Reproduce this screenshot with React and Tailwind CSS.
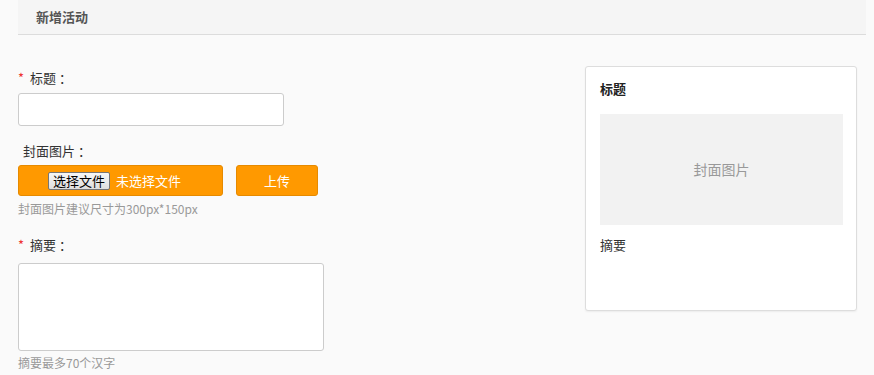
const font = { fontFamily: '"Noto Sans CJK SC", "Liberation Sans", sans-serif' };

export default function App() {
  return (
    <div className="min-h-[375px] w-[874px] bg-[#fafafa] text-[#333]" style={font}>
      {/* Header */}
      <div className="ml-[18px] flex h-[35px] w-[848px] items-center border-b border-[#dcdcdc] bg-[#f5f5f5] pl-[18px]">
        <h2 className="text-[13px] font-bold text-[#555]">新增活动</h2>
      </div>

      <div className="flex px-[18px]">
        {/* Form */}
        <div className="w-[564px] shrink-0 pt-[33px]">
          <div className="flex h-[20px] items-center text-[13px]">
            <span className="mr-[6px] text-[#e33]">*</span>
            <span>标题 ：</span>
          </div>
          <input
            type="text"
            className="mt-[5px] block h-[33px] w-[266px] rounded-[3px] border border-[#ccc] bg-white outline-none"
          />

          <div className="mt-[15px] flex h-[20px] items-center pl-[5px] text-[13px]">封面图片 ：</div>
          <div className="mt-[4px] flex gap-[13px]">
            <div className="flex h-[31px] w-[205px] items-center gap-[6px] rounded-[3px] border border-[#e68a00] bg-[#ff9900] pl-[29px]">
              <button className="h-[18px] rounded-[2px] border border-[#767676] bg-[linear-gradient(#f6f6f6,#dedede)] px-[4px] text-[13px] leading-[15px] text-black">
                选择文件
              </button>
              <span className="text-[13px] text-white">未选择文件</span>
            </div>
            <button className="h-[31px] w-[82px] rounded-[3px] border border-[#e68a00] bg-[#ff9900] text-[13px] text-white">
              上传
            </button>
          </div>
          <p className="mt-[5px] text-[12px] leading-[16px] text-[#999]">封面图片建议尺寸为300px*150px</p>

          <div className="mt-[18px] flex h-[20px] items-center text-[13px]">
            <span className="mr-[6px] text-[#e33]">*</span>
            <span>摘要 ：</span>
          </div>
          <textarea className="mt-[8px] block h-[88px] w-[306px] resize-none rounded-[3px] border border-[#ccc] bg-white outline-none" />
          <p className="mt-[4px] text-[12px] leading-[16px] text-[#999]">摘要最多70个汉字</p>
        </div>

        {/* Preview card */}
        <div className="ml-[3px] mt-[31px] h-[245px] w-[272px] shrink-0 rounded-[3px] border border-[#ddd] bg-white px-[14px] pt-[12px] shadow-[0_1px_2px_rgba(0,0,0,0.06)]">
          <h3 className="text-[13px] font-bold leading-[20px] text-[#222]">标题</h3>
          <div className="mt-[15px] flex h-[111px] w-[243px] items-center justify-center bg-[#f2f2f2] text-[14px] text-[#999]">
            封面图片
          </div>
          <p className="mt-[10px] text-[13px] leading-[20px] text-[#333]">摘要</p>
        </div>
      </div>
    </div>
  );
}
